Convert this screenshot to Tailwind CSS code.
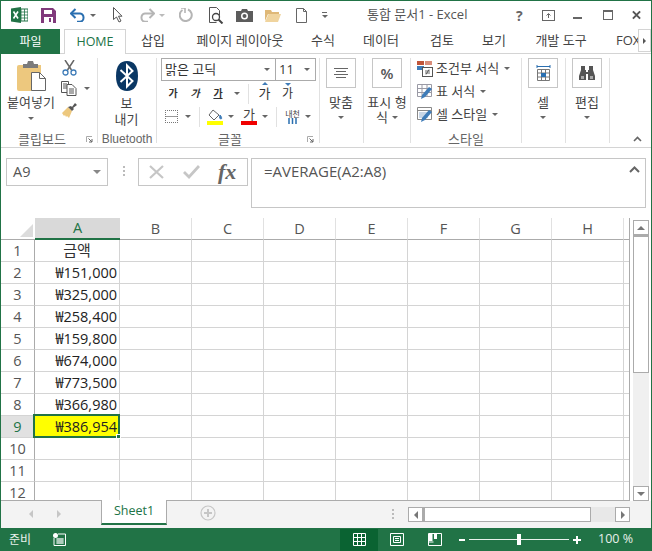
<!DOCTYPE html>
<html lang="ko">
<head>
<meta charset="utf-8">
<title>통합 문서1 - Excel</title>
<script src="https://cdn.jsdelivr.net/npm/@tailwindcss/browser@4"></script>
</head>
<body class="bg-white">
<div class="w-[652px] h-[551px] overflow-hidden flex flex-col bg-white border-x border-t border-[#217346] text-[#444] font-['Open_Sans','Noto_Sans_CJK_KR',sans-serif] text-[12px]">

    <!-- 타이틀바 -->
    <div class="h-[28px] shrink-0 flex items-center relative">
        <svg class="ml-[10px] w-[17px] h-[16px]" viewBox="0 0 17 16">
            <rect x="6" y="2" width="11" height="12" fill="#fff" stroke="#217346"/>
            <path d="M10 2v12M13.500 2v12M6 5h11M6 8h11M6 11h11" stroke="#217346" stroke-width=".8"/>
            <path d="M0 1.500 10 0v16L0 14.500z" fill="#217346"/>
            <path d="M2.500 4.500 7 11.500M7 4.500 2.500 11.500" stroke="#fff" stroke-width="1.600"/>
        </svg>
        <svg class="ml-[13px] w-[15px] h-[15px]" viewBox="0 0 15 15">
            <path d="M0 0h12l3 3v12H0z" fill="#80397b"/>
            <rect x="3" y="2" width="8" height="4" fill="#fff"/>
            <rect x="3" y="9" width="9" height="6" fill="#fff"/>
            <rect x="8" y="10" width="2" height="4" fill="#80397b"/>
        </svg>
        <svg class="ml-[14px] w-[16px] h-[14px]" viewBox="0 0 16 14" fill="none">
            <path d="M1 5.500h9a4.200 4.200 0 0 1 0 8.300H7" stroke="#2a6fb0" stroke-width="2"/>
            <path d="M5.500 1 1 5.500 5.500 10" stroke="#2a6fb0" stroke-width="2"/>
        </svg>
        <span class="ml-[4px] w-0 h-0 border-x-[3px] border-x-transparent border-t-[3px] border-t-[#666]"></span>
        <svg class="ml-[17px] w-[10px] h-[16px]" viewBox="0 0 10 16">
            <path d="M.5.500v12l3-2.500 2.500 5 2-1-2.500-4.800H9z" fill="#fff" stroke="#555"/>
        </svg>
        <svg class="ml-[16px] w-[16px] h-[14px]" viewBox="0 0 16 14" fill="none">
            <path d="M15 5.500H6a4.200 4.200 0 0 0 0 8.300h3" stroke="#b5b5b5" stroke-width="2"/>
            <path d="M10.500 1 15 5.500 10.500 10" stroke="#b5b5b5" stroke-width="2"/>
        </svg>
        <span class="ml-[4px] w-0 h-0 border-x-[3px] border-x-transparent border-t-[3px] border-t-[#bbb]"></span>
        <svg class="ml-[14px] w-[14px] h-[14px]" viewBox="0 0 14 14" fill="none">
            <path d="M9 1.500a6 6 0 1 1-5.500.5" stroke="#b5b5b5" stroke-width="2"/>
            <path d="M2 0h4v5" stroke="#b5b5b5" stroke-width="1.600"/>
        </svg>
        <svg class="ml-[16px] w-[15px] h-[17px]" viewBox="0 0 15 17" fill="none">
            <path d="M.5.500h7l3 3v5M.5.500v15h7" stroke="#555"/>
            <circle cx="7" cy="10" r="3.500" stroke="#444" stroke-width="1.300"/>
            <path d="m9.500 12.500 4 4" stroke="#444" stroke-width="2"/>
        </svg>
        <svg class="ml-[12px] w-[17px] h-[13px]" viewBox="0 0 17 13">
            <path d="M0 2h5l1-2h5l1 2h5v11H0z" fill="#5c5c5c"/>
            <circle cx="8.500" cy="7" r="3.500" fill="#fff"/>
            <circle cx="8.500" cy="7" r="2" fill="#5c5c5c"/>
        </svg>
        <svg class="ml-[12px] w-[16px] h-[13px]" viewBox="0 0 16 13">
            <path d="M0 1h6l1 2h7v2H3L0 12z" fill="#dfb877"/>
            <path d="M3.500 5H16l-3 8H0z" fill="#f0d49e"/>
        </svg>
        <svg class="ml-[15px] w-[11px] h-[15px]" viewBox="0 0 11 15" fill="none">
            <path d="M.5.500h7l3 3v11H.5zM7.500.500v3h3" stroke="#666"/>
        </svg>
        <span class="ml-[15px] flex flex-col gap-[2px]">
            <span class="w-[5px] h-px bg-[#666]"></span>
            <span class="w-0 h-0 border-x-[3px] border-x-transparent border-t-[3px] border-t-[#666]"></span>
        </span>
        <span class="ml-[39px] w-[105px] text-[13px] text-[#555] whitespace-nowrap">통합 문서1 - Excel</span>
        <span class="ml-[44px] w-[12px] text-[14px] font-bold text-[#666]">?</span>
        <svg class="ml-[14px] w-[13px] h-[11px]" viewBox="0 0 13 11" fill="none">
            <rect x=".5" y=".5" width="12" height="10" stroke="#666"/>
            <path d="M3 .5h7M6.500 8V4M4.500 5.500l2-2 2 2" stroke="#666"/>
        </svg>
        <span class="ml-[18px] w-[9px] h-[2px] mt-[6px] bg-[#666]"></span>
        <span class="ml-[21px] w-[10px] h-[10px] border border-t-2 border-[#666]"></span>
        <svg class="ml-[19px] w-[9px] h-[10px]" viewBox="0 0 10 10">
            <path d="M1 1l8 8M9 1l-8 8" stroke="#555" stroke-width="2.200"/>
        </svg>
    </div>

    <!-- 탭 -->
    <div class="h-[25px] shrink-0 flex border-b border-[#d4d4d4] relative text-[13px] whitespace-nowrap">
        <div class="w-[59px] h-[25px] bg-[#217346] text-white flex items-center justify-center text-[12px]">파일</div>
        <div class="ml-[4px] w-[62px] h-[25px] bg-white border-x border-t border-[#d4d4d4] text-[#217346] flex items-center justify-center text-[12.500px]">HOME</div>
        <div class="ml-[14px] w-[26px] flex items-center justify-center">삽입</div>
        <div class="ml-[30px] w-[88px] flex items-center justify-center">페이지 레이아웃</div>
        <div class="ml-[26px] w-[26px] flex items-center justify-center">수식</div>
        <div class="ml-[25px] w-[40px] flex items-center justify-center">데이터</div>
        <div class="ml-[28px] w-[26px] flex items-center justify-center">검토</div>
        <div class="ml-[26px] w-[26px] flex items-center justify-center">보기</div>
        <div class="ml-[28px] w-[52px] flex items-center justify-center">개발 도구</div>
        <div class="ml-[29px] flex items-center">FOX</div>
        <div class="absolute right-0 top-0 w-[13px] h-[23px] bg-white border border-[#d4d4d4] flex items-center justify-center">
            <span class="w-0 h-0 border-y-[3px] border-y-transparent border-l-[3px] border-l-[#555]"></span>
        </div>
    </div>

    <!-- 리본 -->
    <div class="h-[94px] shrink-0 flex pt-[4px] border-b border-[#d4d4d4] relative">

        <!-- 클립보드 -->
        <div class="w-[97px] h-[85px] border-r border-[#e1e1e1] flex flex-col">
            <div class="h-[73px] flex">
                <div class="w-[60px] flex flex-col items-center">
                    <svg class="mt-[3px] w-[29px] h-[30px]" viewBox="0 0 29 30">
                        <path d="M2 4h22v26H2a2 2 0 0 1-2-2V6a2 2 0 0 1 2-2z" fill="#edc87e"/>
                        <path d="M6 3h4l1-3h5l1 3h4v4H6z" fill="#7b7b7b"/>
                        <path d="M14.500 11.500h8l6 6v12h-14z" fill="#fff" stroke="#666"/>
                        <path d="M22.500 11.500v6h6" fill="none" stroke="#666"/>
                    </svg>
                    <span class="mt-[2px] text-[13px] leading-[18px] whitespace-nowrap">붙여넣기</span>
                    <span class="mt-[6px] w-0 h-0 border-x-[3px] border-x-transparent border-t-[3px] border-t-[#666]"></span>
                </div>
                <div class="flex flex-col">
                    <svg class="mt-[2px] ml-[1px] w-[15px] h-[16px]" viewBox="0 0 15 16" fill="none">
                        <path d="M3 0l6.500 10M12 0 5.500 10" stroke="#666" stroke-width="1.500"/>
                        <circle cx="3.500" cy="12.500" r="2.500" stroke="#3f7cb8" stroke-width="1.300"/>
                        <circle cx="11.500" cy="12.500" r="2.500" stroke="#3f7cb8" stroke-width="1.300"/>
                    </svg>
                    <div class="mt-[5px] flex items-center">
                        <svg class="w-[16px] h-[15px]" viewBox="0 0 16 15" fill="none" stroke="#555">
                            <path d="M.5.500h7v11h-7zM2 3h4M2 5h4M2 7h4"/>
                            <path d="M6 3.500h5l4 4v7H6z" fill="#fff"/>
                            <path d="M8 8h5M8 10h5M8 12h5"/>
                        </svg>
                        <span class="ml-[7px] w-0 h-0 border-x-[3px] border-x-transparent border-t-[3px] border-t-[#666]"></span>
                    </div>
                    <svg class="mt-[7px] ml-[1px] w-[16px] h-[15px]" viewBox="0 0 16 15">
                        <path d="M0 10l6-6 4 4-3 7-2-2-1 1-1-2-1 1z" fill="#edc87e"/>
                        <path d="M6 4l4 4 2-2-1-1 4-3-2-2-3 4-1-1z" fill="#555"/>
                    </svg>
                </div>
            </div>
            <div class="h-[16px] -mb-[4px] pt-[2px] flex items-center relative text-[13px] text-[#666]">
                <span class="ml-[17px]">클립보드</span>
                <svg class="absolute left-[85px] top-[5px] w-[7px] h-[7px]" viewBox="0 0 7 7" fill="none"><path d="M.5 6V.5H6" stroke="#aaa"/><path d="M2.500 2.500 6 6M6 3v3H3" stroke="#666"/></svg>
            </div>
        </div>

        <!-- Bluetooth -->
        <div class="w-[59px] h-[85px] border-r border-[#e1e1e1] flex flex-col">
            <div class="h-[73px] flex flex-col items-center pr-[1px]">
                <svg class="mt-[3px] w-[22px] h-[30px]" viewBox="0 0 22 30" fill="none">
                    <path d="M11 0C18 0 22 5 22 15s-4 15-11 15S0 25 0 15 4 0 11 0z" fill="#0a3764"/>
                    <path d="M4.500 9 16.500 20 11 25.500V4.500L16.500 10 4.500 21" stroke="#fff" stroke-width="2"/>
                </svg>
                <span class="mt-[4px] text-[13px] leading-[16px]">보</span>
                <span class="text-[13px] leading-[16px]">내기</span>
            </div>
            <div class="h-[16px] -mb-[4px] flex items-center justify-center font-['Liberation_Sans',sans-serif] text-[12px] text-[#666]">Bluetooth</div>
        </div>

        <!-- 글꼴 -->
        <div class="w-[163px] h-[85px] border-r border-[#e1e1e1] flex flex-col">
            <div class="h-[73px] pl-[4px]">
                <div class="flex">
                    <div class="w-[115px] h-[23px] border border-[#ababab] flex items-center justify-between pl-[3px] pr-[5px] text-[13px] text-[#333]">
                        <span>맑은 고딕</span>
                        <span class="w-0 h-0 border-x-[3px] border-x-transparent border-t-[3px] border-t-[#666]"></span>
                    </div>
                    <div class="w-[40px] h-[23px] border border-l-0 border-[#ababab] flex items-center justify-between pl-[3px] pr-[5px] text-[13px] text-[#333]">
                        <span>11</span>
                        <span class="w-0 h-0 border-x-[3px] border-x-transparent border-t-[3px] border-t-[#666]"></span>
                    </div>
                </div>
                <div class="h-[23px] mt-px flex items-center text-[11px] text-[#333]">
                    <span class="ml-[5px] w-[14px] font-bold text-center text-[10px]">가</span>
                    <span class="ml-[8px] w-[14px] italic text-center text-[10px] font-bold">가</span>
                    <span class="ml-[9px] w-[14px] underline font-bold text-center text-[10px]">가</span>
                    <span class="ml-[9px] w-0 h-0 border-x-[3px] border-x-transparent border-t-[3px] border-t-[#666]"></span>
                    <span class="ml-[8px] w-px h-[20px] bg-[#e1e1e1]"></span>
                    <span class="ml-[9px] w-[13px] relative text-[13px] text-center">가<span class="absolute left-[4px] -top-[2px] w-0 h-0 border-x-[3px] border-x-transparent border-b-[3px] border-b-[#3f7cb8]"></span></span>
                    <span class="ml-[10px] w-[13px] relative text-[12px] text-center">가<span class="absolute left-[4px] -top-[2px] w-0 h-0 border-x-[3px] border-x-transparent border-t-[3px] border-t-[#3f7cb8]"></span></span>
                </div>
                <div class="h-[23px] flex items-center">
                    <span class="ml-[4px] w-[13px] h-[13px] border border-dotted border-[#777] bg-[linear-gradient(#999,#999)] bg-[length:100%_1px] bg-center bg-no-repeat"></span>
                    <span class="ml-[7px] w-0 h-0 border-x-[3px] border-x-transparent border-t-[3px] border-t-[#666]"></span>
                    <span class="ml-[8px] w-px h-[20px] bg-[#e1e1e1]"></span>
                    <span class="ml-[7px] w-[16px] flex flex-col items-center">
                        <svg class="w-[15px] h-[12px]" viewBox="0 0 15 12" fill="none">
                            <path d="M5 1 1 6l5 5 5-5z" fill="#fff" stroke="#666"/>
                            <path d="M12 6c2 2 2 4 1 4s-2-1-1-4z" fill="#3f7cb8" stroke="#3f7cb8"/>
                        </svg>
                        <span class="w-[16px] h-[4px] bg-[#ffff00]"></span>
                    </span>
                    <span class="ml-[5px] w-0 h-0 border-x-[3px] border-x-transparent border-t-[3px] border-t-[#666]"></span>
                    <span class="ml-[7px] w-[16px] flex flex-col items-center text-[13px] leading-[13px] text-[#444]">가<span class="w-[16px] h-[4px] bg-[#f00000]"></span></span>
                    <span class="ml-[5px] w-0 h-0 border-x-[3px] border-x-transparent border-t-[3px] border-t-[#666]"></span>
                    <span class="ml-[8px] w-px h-[20px] bg-[#e1e1e1]"></span>
                    <span class="ml-[8px] w-[15px] flex flex-col items-center text-[8px] leading-[9px] whitespace-nowrap">내천
                        <svg class="w-[9px] h-[6px]" viewBox="0 0 9 6"><path d="M1 0v6M4.500 0v6M8 0v6" stroke="#2a6fb0" stroke-width="1.500"/></svg>
                    </span>
                    <span class="ml-[5px] w-0 h-0 border-x-[3px] border-x-transparent border-t-[3px] border-t-[#666]"></span>
                </div>
            </div>
            <div class="h-[16px] -mb-[4px] pt-[2px] flex items-center relative text-[13px] text-[#666]">
                <span class="ml-[61px]">글꼴</span>
                <svg class="absolute left-[150px] top-[5px] w-[7px] h-[7px]" viewBox="0 0 7 7" fill="none"><path d="M.5 6V.5H6" stroke="#aaa"/><path d="M2.500 2.500 6 6M6 3v3H3" stroke="#666"/></svg>
            </div>
        </div>

        <!-- 맞춤 -->
        <div class="w-[44px] h-[85px] border-r border-[#e1e1e1] flex flex-col items-center pl-[5px] pr-[6px]">
            <div class="w-[30px] h-[30px] shrink-0 border border-[#c6c6c6] flex flex-col items-center justify-center gap-[2px]">
                <span class="w-[14px] h-px bg-[#666]"></span>
                <span class="w-[10px] h-px bg-[#666]"></span>
                <span class="w-[14px] h-px bg-[#666]"></span>
                <span class="w-[10px] h-px bg-[#666]"></span>
            </div>
            <span class="mt-[5px] text-[13px] leading-[18px] whitespace-nowrap">맞춤</span>
            <span class="mt-[5px] w-0 h-0 border-x-[3px] border-x-transparent border-t-[3px] border-t-[#666]"></span>
        </div>

        <!-- 표시 형식 -->
        <div class="w-[47px] h-[85px] border-r border-[#e1e1e1] flex flex-col items-center">
            <div class="w-[30px] h-[30px] shrink-0 border border-[#c6c6c6] flex items-center justify-center text-[15px] font-semibold text-[#555]">%</div>
            <span class="mt-[7px] text-[13px] leading-[15px] whitespace-nowrap">표시 형</span>
            <span class="text-[13px] leading-[15px] flex items-center">식<span class="ml-[4px] w-0 h-0 border-x-[3px] border-x-transparent border-t-[3px] border-t-[#666]"></span></span>
        </div>

        <!-- 스타일 -->
        <div class="w-[111px] h-[85px] border-r border-[#e1e1e1] flex flex-col">
            <div class="h-[73px] pl-[6px] text-[13px]">
                <div class="h-[23px] mt-[-1px] flex items-center">
                    <svg class="w-[16px] h-[16px]" viewBox="0 0 16 16">
                        <rect width="7" height="4" fill="#c0553a"/><rect y="5" width="7" height="4" fill="#3f7cb8"/><rect x="8" width="7" height="4" fill="#d98d7a"/>
                        <rect x="5.500" y="6.500" width="10" height="9" fill="#fff" stroke="#555"/>
                        <path d="M8 10h5M8 12h5M12 8.500l-3 5" stroke="#444" stroke-width=".8"/>
                    </svg>
                    <span class="ml-[3px]">조건부 서식</span>
                    <span class="ml-[5px] w-0 h-0 border-x-[3px] border-x-transparent border-t-[3px] border-t-[#666]"></span>
                </div>
                <div class="h-[23px] flex items-center">
                    <svg class="w-[16px] h-[16px]" viewBox="0 0 16 16" fill="none">
                        <path d="M.5.500h14v12H.5zM.5 4.500h14M.5 8.500h14M5 .500v12M10 .500v12" stroke="#9a9aa5"/>
                        <path d="M4 15l1-4 7-8 3 2-7 8z" fill="#3f7cb8"/>
                    </svg>
                    <span class="ml-[3px]">표 서식</span>
                    <span class="ml-[5px] w-0 h-0 border-x-[3px] border-x-transparent border-t-[3px] border-t-[#666]"></span>
                </div>
                <div class="h-[23px] flex items-center">
                    <svg class="w-[16px] h-[16px]" viewBox="0 0 16 16" fill="none">
                        <path d="M.5.500h14v12H.5z" stroke="#888"/><path d="M.5 3.500h14" stroke="#888"/><rect x="2" y="5" width="9" height="6" fill="#c8d6e6"/>
                        <path d="M4 15l1-4 7-8 3 2-7 8z" fill="#3f7cb8"/>
                    </svg>
                    <span class="ml-[3px]">셀 스타일</span>
                    <span class="ml-[5px] w-0 h-0 border-x-[3px] border-x-transparent border-t-[3px] border-t-[#666]"></span>
                </div>
            </div>
            <div class="h-[16px] -mb-[4px] pt-[2px] flex items-center justify-center text-[13px] text-[#666]">스타일</div>
        </div>

        <!-- 셀 -->
        <div class="w-[44px] h-[85px] border-r border-[#e1e1e1] flex flex-col items-center pr-[1px]">
            <div class="w-[30px] h-[30px] shrink-0 border border-[#c6c6c6] flex items-center justify-center">
                <svg class="w-[15px] h-[17px]" viewBox="0 0 15 17" fill="none">
                    <path d="M1 1.500h13M1 0v3M14 0v3" stroke="#2a6fb0"/>
                    <path d="M1.500 4.500h12v11h-12zM1.500 8h12M1.500 12h12M5.500 4.500v11M9.500 4.500v11" stroke="#777"/>
                    <rect x="5" y="8" width="5" height="4" fill="#2a6fb0"/>
                </svg>
            </div>
            <span class="mt-[5px] text-[13px] leading-[18px]">셀</span>
            <span class="mt-[5px] w-0 h-0 border-x-[3px] border-x-transparent border-t-[3px] border-t-[#666]"></span>
        </div>

        <!-- 편집 -->
        <div class="w-[44px] h-[85px] border-r border-[#e1e1e1] flex flex-col items-center pr-[1px]">
            <div class="w-[30px] h-[30px] shrink-0 border border-[#c6c6c6] flex items-center justify-center">
                <svg class="w-[16px] h-[14px]" viewBox="0 0 16 14">
                    <path d="M2 0h4v4h1v2h2V4h1V0h4v4l2 6v4H9V8H7v6H0v-4l2-6z" fill="#555"/>
                    <path d="M2 10h3v3H2zM11 10h3v3h-3z" fill="#aaa"/>
                </svg>
            </div>
            <span class="mt-[5px] text-[13px] leading-[18px]">편집</span>
            <span class="mt-[5px] w-0 h-0 border-x-[3px] border-x-transparent border-t-[3px] border-t-[#666]"></span>
        </div>

        <svg class="absolute right-[9px] bottom-[5px] w-[9px] h-[6px]" viewBox="0 0 9 6" fill="none"><path d="M1 5l3.500-3.500L8 5" stroke="#666" stroke-width="1.600"/></svg>
    </div>

    <!-- 수식 입력줄 -->
    <div class="h-[70px] shrink-0 flex items-start pt-[10px]">
        <div class="ml-[5px] w-[102px] h-[28px] border border-[#c6c6c6] flex items-center justify-between pl-[6px] pr-[6px] text-[14.500px] text-[#555]">
            <span>A9</span>
            <span class="w-0 h-0 border-x-[4px] border-x-transparent border-t-[4px] border-t-[#888]"></span>
        </div>
        <div class="ml-[15px] mt-[8px] flex flex-col gap-[2px]">
            <span class="w-[2px] h-[2px] bg-[#bbb]"></span><span class="w-[2px] h-[2px] bg-[#bbb]"></span><span class="w-[2px] h-[2px] bg-[#bbb]"></span>
        </div>
        <div class="ml-[13px] w-[110px] h-[28px] border border-[#c6c6c6] flex items-center">
            <svg class="ml-[10px] w-[15px] h-[14px]" viewBox="0 0 15 14"><path d="M1 1l13 12M14 1 1 13" stroke="#c6c6c6" stroke-width="2.200"/></svg>
            <svg class="ml-[19px] w-[17px] h-[14px]" viewBox="0 0 17 14" fill="none"><path d="M1 7l5 5L16 1" stroke="#c6c6c6" stroke-width="2.800"/></svg>
            <span class="ml-[18px] font-['Liberation_Serif',serif] italic font-bold text-[22px] leading-none text-[#666]">fx</span>
        </div>
        <div class="ml-[3px] w-[395px] h-[50px] border border-[#c6c6c6] pl-[12px] pt-[2px] pr-[5px] flex justify-between text-[15px] leading-[20px] text-[#555]">
            <span>=AVERAGE(A2:A8)</span>
            <svg class="mt-[5px] w-[11px] h-[7px]" viewBox="0 0 11 7" fill="none"><path d="M1 6l4.500-4.500L10 6" stroke="#666" stroke-width="2"/></svg>
        </div>
    </div>

    <!-- 시트 -->
    <div class="h-[283px] shrink-0 flex items-start">
        <div id="sheet" class="w-[629px] h-[283px] overflow-hidden grid grid-cols-[34px_85px_72px_72px_72px_72px_72px_72px_72px_5px] grid-rows-[22px_repeat(12,22px)] border-r border-b border-[#ababab] text-[14.500px] text-[#333]"></div>
        <div class="ml-[3px] w-[16px] h-[283px] flex flex-col pt-[2px]">
            <div class="h-[15px] border border-[#ababab] flex items-center justify-center">
                <span class="w-0 h-0 border-x-[4px] border-x-transparent border-b-[4px] border-b-[#777]"></span>
            </div>
            <div class="h-[138px] bg-white border-2 border-[#ababab] border-x border-b"></div>
            <div class="flex-1 bg-[#f0f0f0]"></div>
            <div class="h-[15px] bg-white border border-[#ababab] flex items-center justify-center">
                <span class="w-0 h-0 border-x-[4px] border-x-transparent border-t-[4px] border-t-[#777]"></span>
            </div>
        </div>
    </div>

    <!-- 시트 탭 + 가로 스크롤 -->
    <div class="h-[27px] shrink-0 flex bg-[#f3f3f3] relative">
        <span class="ml-[28px] mt-[9px] w-0 h-0 border-y-[4px] border-y-transparent border-r-[4px] border-r-[#c6c6c6]"></span>
        <span class="ml-[24px] mt-[9px] w-0 h-0 border-y-[4px] border-y-transparent border-l-[4px] border-l-[#c6c6c6]"></span>
        <div class="ml-[40px] w-[66px] h-[25px] -mt-px bg-white border-x border-b-2 border-x-[#ababab] border-b-[#217346] flex items-center justify-center text-[12.500px] text-[#217346]">Sheet1</div>
        <svg class="ml-[33px] mt-[4px] w-[16px] h-[16px]" viewBox="0 0 16 16" fill="none">
            <circle cx="8" cy="8" r="7" stroke="#c6c6c6" stroke-width="1.200"/>
            <path d="M8 4v8M4 8h8" stroke="#c6c6c6" stroke-width="2"/>
        </svg>
        <div class="ml-[176px] mt-[8px] flex flex-col gap-[2px]">
            <span class="w-[2px] h-[2px] bg-[#bbb]"></span><span class="w-[2px] h-[2px] bg-[#bbb]"></span><span class="w-[2px] h-[2px] bg-[#bbb]"></span>
        </div>
        <div class="ml-[14px] mt-[6px] w-[222px] h-[15px] flex bg-[#e8e8e8]">
            <div class="w-[15px] h-[15px] bg-white border border-[#ababab] flex items-center justify-center"><span class="w-0 h-0 border-y-[4px] border-y-transparent border-r-[4px] border-r-[#777]"></span></div>
            <div class="w-[168px] h-[15px] bg-white border-y border-r border-[#ababab] border-l-2"></div>
            <div class="ml-auto w-[15px] h-[15px] bg-white border border-[#ababab] flex items-center justify-center"><span class="w-0 h-0 border-y-[4px] border-y-transparent border-l-[4px] border-l-[#777]"></span></div>
        </div>
    </div>

    <!-- 상태바 -->
    <div class="h-[23px] shrink-0 -mx-px flex items-center bg-[#217346] text-[#e8f0ea] text-[12px]">
        <span class="ml-[9px] w-[24px]">준비</span>
        <svg class="ml-[20px] w-[13px] h-[13px]" viewBox="0 0 13 13" fill="none">
            <circle cx="2.500" cy="2.500" r="2.500" fill="#fff"/>
            <path d="M5 1h7.500v11.500H1V5" stroke="#fff"/><path d="M3 6h8M3 8h8M3 10h8M5 5v6M7 5v6M9 5v6" stroke="#fff" stroke-width=".8"/>
        </svg>
        <div class="ml-[274px] w-[38px] h-[22px] bg-[#0a6332] flex items-center justify-center">
            <svg class="w-[13px] h-[13px]" viewBox="0 0 13 13" fill="none"><path d="M.5.500h12v12H.5zM.5 4.500h12M.5 8.500h12M4.500.500v12M8.500.500v12" stroke="#fff"/></svg>
        </div>
        <svg class="ml-[12px] w-[14px] h-[13px]" viewBox="0 0 14 13" fill="none"><path d="M.5.500h13v12H.5zM3.500 3.500h7v6h-7zM5 5.500h4M5 7.500h4" stroke="#fff"/></svg>
        <svg class="ml-[24px] w-[14px] h-[13px]" viewBox="0 0 14 13" fill="none"><path d="M.5.500h13v12H.5z" stroke="#fff"/><path d="M1 1h3.500v7H1zM6 1h3v5H6z" fill="#fff"/><path d="M.5 9h5" stroke="#fff"/></svg>
        <span class="ml-[17px] w-[6px] h-[2px] bg-white"></span>
        <div class="ml-[4px] w-[100px] h-px bg-white/90 relative">
            <span class="absolute left-[48px] -top-[5px] w-[4px] h-[11px] bg-white"></span>
        </div>
        <svg class="ml-[4px] w-[8px] h-[8px]" viewBox="0 0 8 8"><path d="M4 0v8M0 4h8" stroke="#fff" stroke-width="2"/></svg>
        <span class="ml-[17px] text-[12.500px] whitespace-nowrap">100 %</span>
    </div>
</div>

<script>
    // 시트 그리드 채움
    const amounts = ['₩151,000', '₩325,000', '₩258,400', '₩159,800', '₩674,000', '₩773,500', '₩366,980', '₩386,954'];
    const sheet = document.getElementById('sheet');
    let html = '<div class="relative border-b border-[#ababab]"><svg class="absolute right-[2px] bottom-[2px] w-[13px] h-[13px]" viewBox="0 0 13 13"><path d="M13 0v13H0z" fill="#dcdcdc"/></svg></div>';
    ['A', 'B', 'C', 'D', 'E', 'F', 'G', 'H', ''].forEach((c, i) => {
        if (i === 0) {
            html += `<div class="bg-[#d9d9d9] border-b-2 border-[#217346] text-[#217346] flex items-center justify-center">${c}</div>`;
        } else {
            html += `<div class="border-b border-[#ababab] ${i < 8 ? 'border-r border-r-[#e1e1e1]' : ''} text-[#555] flex items-center justify-center">${c}</div>`;
        }
    });
    for (let r = 1; r <= 12; r++) {
        const hd = r === 9 ? 'bg-[#e1e1e1] text-[#217346]' : 'text-[#555]';
        html += `<div class="${hd} border-b border-r border-b-[#d4d4d4] border-r-[#ababab] flex items-center justify-center">${r}</div>`;
        if (r === 1) {
            html += '<div class="border-b border-r border-[#d4d4d4] flex items-center justify-center text-[15px]">금액</div>';
        } else if (r === 9) {
            html += `<div class="relative bg-[#ffff00] border-b border-r border-[#d4d4d4] flex items-center justify-end pr-[2px] text-[#222]">${amounts[r - 2]}<span class="absolute -left-[2px] -top-[2px] -right-[1px] -bottom-[1px] border-2 border-[#217346]"></span><span class="absolute -right-[2px] -bottom-[2px] w-[5px] h-[5px] bg-[#217346] border border-white z-10"></span></div>`;
        } else if (r < 9) {
            html += `<div class="border-b border-r border-[#d4d4d4] flex items-center justify-end pr-[2px] text-[#222]">${amounts[r - 2]}</div>`;
        } else {
            html += '<div class="border-b border-r border-[#d4d4d4]"></div>';
        }
        for (let c = 0; c < 7; c++) html += '<div class="border-b border-r border-[#d4d4d4]"></div>';
        html += '<div class="border-b border-[#d4d4d4]"></div>';
    }
    sheet.innerHTML = html;
</script>
</body>
</html>
